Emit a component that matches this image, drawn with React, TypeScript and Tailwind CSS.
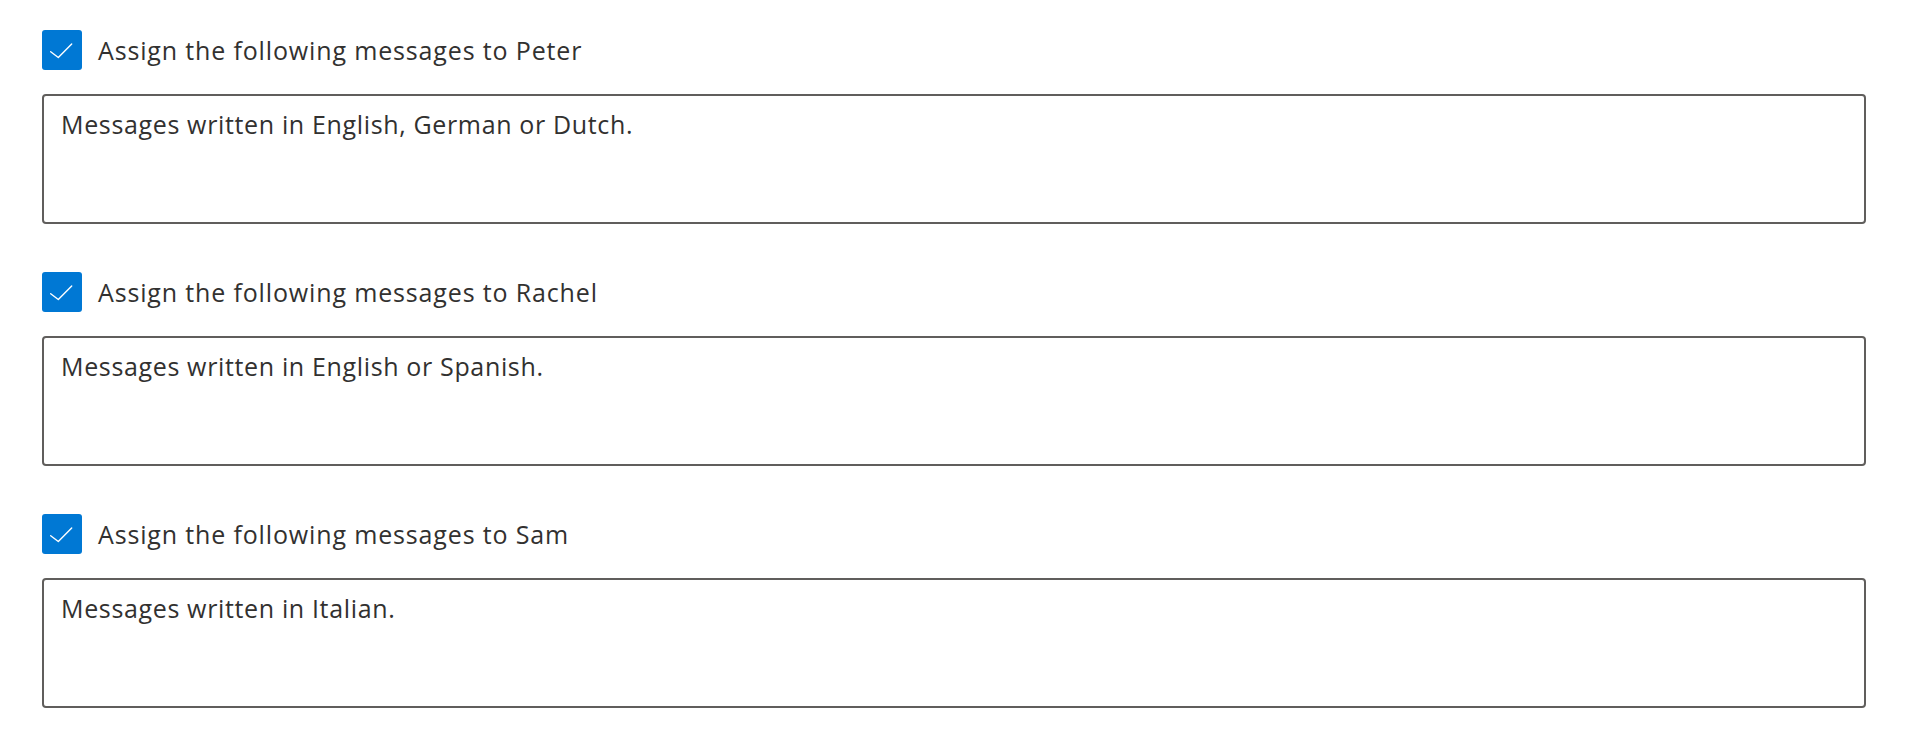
import React from "react";

const items = [
  { name: "Peter", text: "Messages written in English, German or Dutch." },
  { name: "Rachel", text: "Messages written in English or Spanish." },
  { name: "Sam", text: "Messages written in Italian." },
];

const CheckBox: React.FC = () => (
  <span className="flex h-[40px] w-[40px] shrink-0 items-center justify-center rounded-[3px] bg-[#0078d4]">
    <svg width="40" height="40" viewBox="0 0 40 40" fill="none">
      <path d="M8.7 21.7 L16.3 27.5 L29.7 14" stroke="#fff" strokeWidth="1.4" strokeLinecap="round" strokeLinejoin="round" />
    </svg>
  </span>
);

export default function App() {
  return (
    <div className="min-h-screen bg-white pl-[42px] pr-[40px] pt-[30px] font-['Open_Sans',sans-serif] text-[#323130]">
      {items.map((it) => (
        <div key={it.name} className="mb-[48px]">
          <label className="flex h-[40px] items-center gap-4">
            <CheckBox />
            <span className="text-[25px] leading-[32px] tracking-[0.85px]">Assign the following messages to {it.name}</span>
          </label>
          <textarea
            readOnly
            value={it.text}
            className="mt-[24px] block h-[130px] w-full resize-none rounded-[4px] border-2 border-[#605e5c] px-[17px] pt-[12px] text-[25px] leading-[32px] tracking-[0.65px] text-[#323130] outline-none"
          />
        </div>
      ))}
    </div>
  );
}
